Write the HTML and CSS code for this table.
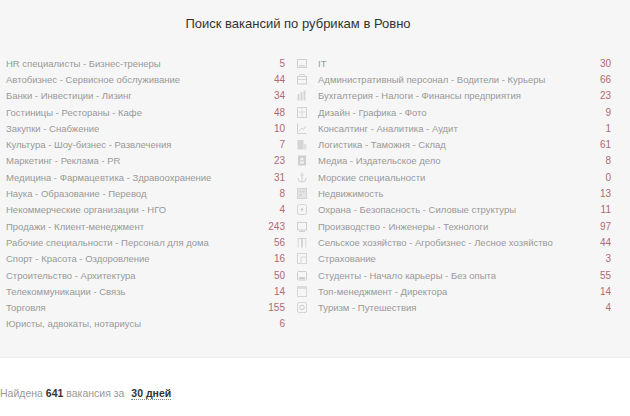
FILE: index.html
```html
<!DOCTYPE html>
<html lang="ru">
<head>
<meta charset="utf-8">
<title>Поиск вакансий по рубрикам в Ровно</title>
<link rel="stylesheet" href="styles.css">
</head>
<body>
<div class="board">
  <h1 class="title">Поиск вакансий по рубрикам в Ровно</h1>
  <div class="cols">
    <ul class="col col-left">
      <li class="row"><span class="name">HR специалисты - Бизнес-тренеры</span><span class="num">5</span></li>
      <li class="row"><span class="name">Автобизнес - Сервисное обслуживание</span><span class="num">44</span></li>
      <li class="row"><span class="name">Банки - Инвестиции - Лизинг</span><span class="num">34</span></li>
      <li class="row"><span class="name">Гостиницы - Рестораны - Кафе</span><span class="num">48</span></li>
      <li class="row"><span class="name">Закупки - Снабжение</span><span class="num">10</span></li>
      <li class="row"><span class="name">Культура - Шоу-бизнес - Развлечения</span><span class="num">7</span></li>
      <li class="row"><span class="name">Маркетинг - Реклама - PR</span><span class="num">23</span></li>
      <li class="row"><span class="name">Медицина - Фармацевтика - Здравоохранение</span><span class="num">31</span></li>
      <li class="row"><span class="name">Наука - Образование - Перевод</span><span class="num">8</span></li>
      <li class="row"><span class="name">Некоммерческие организации - НГО</span><span class="num">4</span></li>
      <li class="row"><span class="name">Продажи - Клиент-менеджмент</span><span class="num">243</span></li>
      <li class="row"><span class="name">Рабочие специальности - Персонал для дома</span><span class="num">56</span></li>
      <li class="row"><span class="name">Спорт - Красота - Оздоровление</span><span class="num">16</span></li>
      <li class="row"><span class="name">Строительство - Архитектура</span><span class="num">50</span></li>
      <li class="row"><span class="name">Телекоммуникации - Связь</span><span class="num">14</span></li>
      <li class="row"><span class="name">Торговля</span><span class="num">155</span></li>
      <li class="row"><span class="name">Юристы, адвокаты, нотариусы</span><span class="num">6</span></li>
    </ul>
    <ul class="col col-right">
      <li class="row"><svg class="ico" viewBox="0 0 10 11"><rect x="0.5" y="1.5" width="9" height="8" fill="none" stroke="#cfcfcf"/><rect x="2" y="7" width="6" height="1.5" fill="#d6d6d6"/></svg><span class="name">IT</span><span class="num">30</span></li>
      <li class="row"><svg class="ico" viewBox="0 0 10 11"><rect x="0.5" y="2.5" width="9" height="7.5" fill="none" stroke="#cfcfcf"/><rect x="3" y="0.5" width="4" height="2" fill="none" stroke="#cfcfcf"/><line x1="0.5" y1="5.5" x2="9.5" y2="5.5" stroke="#d6d6d6"/></svg><span class="name">Административный персонал - Водители - Курьеры</span><span class="num">66</span></li>
      <li class="row"><svg class="ico" viewBox="0 0 10 11"><rect x="0.5" y="4" width="2" height="6.5" fill="#d6d6d6"/><rect x="3.5" y="2" width="2" height="8.5" fill="#d6d6d6"/><rect x="6.5" y="0.5" width="2" height="10" fill="#d6d6d6"/></svg><span class="name">Бухгалтерия - Налоги - Финансы предприятия</span><span class="num">23</span></li>
      <li class="row"><svg class="ico" viewBox="0 0 10 11"><rect x="0.5" y="0.5" width="9" height="10" fill="none" stroke="#d2d2d2"/><line x1="5" y1="0.5" x2="5" y2="10.5" stroke="#dcdcdc"/><line x1="0.5" y1="5" x2="9.5" y2="5" stroke="#dcdcdc"/></svg><span class="name">Дизайн - Графика - Фото</span><span class="num">9</span></li>
      <li class="row"><svg class="ico" viewBox="0 0 10 11"><path d="M0.5 0.5V10.5H9.5" fill="none" stroke="#d2d2d2"/><path d="M2 8L5 5L6.5 6.5L9 3" fill="none" stroke="#cfcfcf"/></svg><span class="name">Консалтинг - Аналитика - Аудит</span><span class="num">1</span></li>
      <li class="row"><svg class="ico" viewBox="0 0 10 11"><rect x="0.5" y="1" width="6" height="9.5" fill="#d4d4d4"/><rect x="6.5" y="5" width="3" height="5.5" fill="#e0e0e0"/></svg><span class="name">Логистика - Таможня - Склад</span><span class="num">61</span></li>
      <li class="row"><svg class="ico" viewBox="0 0 10 11"><rect x="1" y="0.5" width="8" height="10" fill="#cfcfcf"/><circle cx="5" cy="4" r="1.6" fill="#f2f2f2"/><rect x="3" y="6.5" width="4" height="2" fill="#f2f2f2"/></svg><span class="name">Медиа - Издательское дело</span><span class="num">8</span></li>
      <li class="row"><svg class="ico" viewBox="0 0 10 11"><line x1="5" y1="0.5" x2="5" y2="9" stroke="#cfcfcf"/><path d="M1 6Q1 10 5 10Q9 10 9 6" fill="none" stroke="#cfcfcf"/><line x1="3" y1="3" x2="7" y2="3" stroke="#d6d6d6"/></svg><span class="name">Морские специальности</span><span class="num">0</span></li>
      <li class="row"><svg class="ico" viewBox="0 0 10 11"><rect x="0.5" y="0.5" width="9" height="10" fill="#e4e4e4" stroke="#d2d2d2"/><rect x="2.5" y="2.5" width="2" height="2" fill="#d0d0d0"/><rect x="5.5" y="2.5" width="2" height="2" fill="#d0d0d0"/><rect x="2.5" y="6" width="2" height="2" fill="#d0d0d0"/></svg><span class="name">Недвижимость</span><span class="num">13</span></li>
      <li class="row"><svg class="ico" viewBox="0 0 10 11"><rect x="0.5" y="0.5" width="9" height="10" rx="2" fill="none" stroke="#d4d4d4"/><circle cx="5" cy="5.5" r="1.3" fill="#c8c8c8"/></svg><span class="name">Охрана - Безопасность - Силовые структуры</span><span class="num">11</span></li>
      <li class="row"><svg class="ico" viewBox="0 0 10 11"><rect x="0.5" y="1.5" width="9" height="7.5" fill="none" stroke="#cfcfcf"/><line x1="5" y1="9" x2="5" y2="10.5" stroke="#cfcfcf"/><line x1="2" y1="10.5" x2="8" y2="10.5" stroke="#cfcfcf"/></svg><span class="name">Производство - Инженеры - Технологи</span><span class="num">97</span></li>
      <li class="row"><svg class="ico" viewBox="0 0 10 11"><path d="M0.5 1.5H9.5" stroke="#cfcfcf"/><rect x="4" y="1.5" width="2" height="9" fill="#d6d6d6"/><rect x="0.5" y="1.5" width="1.5" height="9" fill="#e2e2e2"/><rect x="8" y="1.5" width="1.5" height="9" fill="#e2e2e2"/></svg><span class="name">Сельское хозяйство - Агробизнес - Лесное хозяйство</span><span class="num">44</span></li>
      <li class="row"><svg class="ico" viewBox="0 0 10 11"><rect x="0.5" y="0.5" width="9" height="10" fill="none" stroke="#d4d4d4"/><path d="M4 4H9.5V10.5H4Z" fill="none" stroke="#d8d8d8"/></svg><span class="name">Страхование</span><span class="num">3</span></li>
      <li class="row"><svg class="ico" viewBox="0 0 10 11"><rect x="0.5" y="1.5" width="9" height="8.5" rx="1" fill="none" stroke="#cdcdcd"/><rect x="2" y="7" width="6" height="2" fill="#cfcfcf"/></svg><span class="name">Студенты - Начало карьеры - Без опыта</span><span class="num">55</span></li>
      <li class="row"><svg class="ico" viewBox="0 0 10 11"><rect x="0.5" y="0.5" width="9" height="10" fill="none" stroke="#d6d6d6"/><rect x="0.5" y="0.5" width="9" height="2.5" fill="#dcdcdc"/></svg><span class="name">Топ-менеджмент - Директора</span><span class="num">14</span></li>
      <li class="row"><svg class="ico" viewBox="0 0 10 11"><rect x="0.5" y="0.5" width="9" height="10" rx="1.5" fill="none" stroke="#d6d6d6"/><circle cx="5" cy="5.5" r="2.3" fill="none" stroke="#cdcdcd"/></svg><span class="name">Туризм - Путешествия</span><span class="num">4</span></li>
    </ul>
  </div>
</div>
<p class="found">Найдена <b class="strong">641</b> вакансия за <b class="period">30 дней</b></p>
</body>
</html>
```

FILE: styles.css
```css
html, body {
  margin: 0;
  padding: 0;
  background: #ffffff;
  font-family: "Liberation Sans", Arial, sans-serif;
}

.board {
  background: #f6f6f6;
  border-bottom: 1px solid #efefef;
  height: 358px;
  box-sizing: border-box;
  padding-top: 15px;
}

.title {
  margin: 0;
  font-size: 13px;
  font-weight: normal;
  color: #333333;
  text-align: center;
  line-height: 18px;
  padding-right: 34px;
}

.cols {
  display: grid;
  grid-template-columns: 279px 314px;
  column-gap: 12px;
  padding-left: 6px;
  margin-top: 22px;
}

.col {
  list-style: none;
  margin: 0;
  padding: 0;
}

.row {
  display: flex;
  align-items: center;
  height: 16.3px;
  font-size: 9.5px;
  color: #999999;
  white-space: nowrap;
}

.name {
  flex: 1;
}

.num {
  color: #b06a74;
  text-align: right;
  font-size: 10px;
}

.ico {
  width: 10px;
  height: 11px;
  flex: none;
  margin-right: 11px;
}

.found {
  margin: 28px 0 0 0;
  font-size: 10.5px;
  color: #999999;
  line-height: 14px;
}

.strong {
  color: #333333;
}

.period {
  color: #333333;
  margin-left: 4px;
  border-bottom: 1px dotted #888888;
}
```
